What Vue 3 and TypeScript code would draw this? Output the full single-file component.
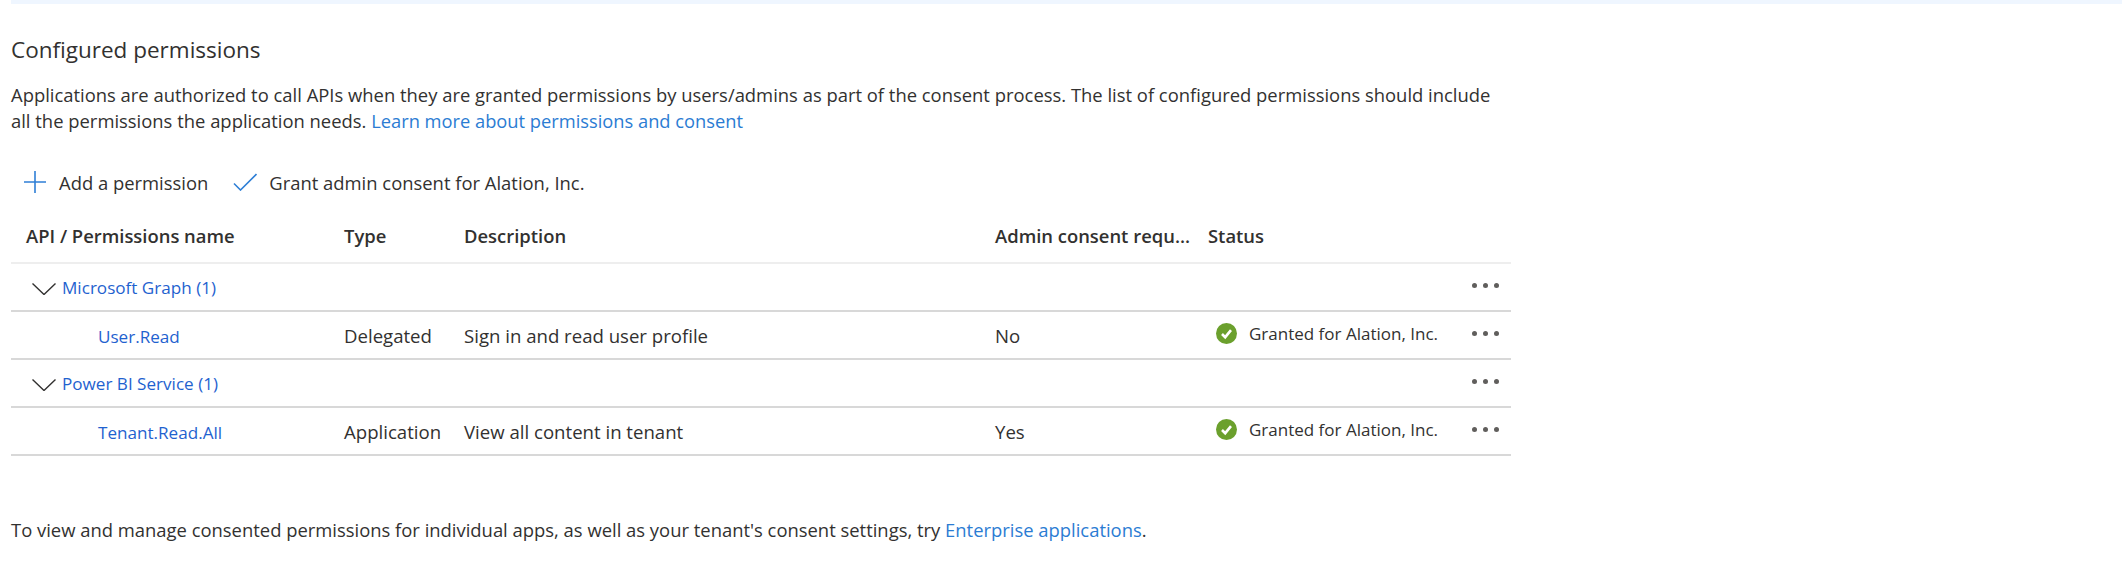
<script setup lang="ts">
interface Row {
  kind: 'group' | 'item'
  name: string
  type?: string
  description?: string
  admin?: string
  status?: string
}

const rows: Row[] = [
  { kind: 'group', name: 'Microsoft Graph (1)' },
  { kind: 'item', name: 'User.Read', type: 'Delegated', description: 'Sign in and read user profile', admin: 'No', status: 'Granted for Alation, Inc.' },
  { kind: 'group', name: 'Power BI Service (1)' },
  { kind: 'item', name: 'Tenant.Read.All', type: 'Application', description: 'View all content in tenant', admin: 'Yes', status: 'Granted for Alation, Inc.' },
]
</script>

<template>
  <div class="page">
    <div class="banner"></div>
    <h2 class="title">Configured permissions</h2>
    <p class="intro">
      Applications are authorized to call APIs when they are granted permissions by users/admins as part of the consent process. The list of configured permissions should include<br />
      all the permissions the application needs.
      <a class="link learn">Learn more about permissions and consent</a>
    </p>

    <div class="toolbar">
      <button class="tool tool-add">
        <svg width="22" height="22" viewBox="0 0 22 22"><path d="M11 0v22M0 11h22" fill="none" stroke="#2f7fd6" stroke-width="1.6" /></svg>
        <span>Add a permission</span>
      </button>
      <button class="tool tool-grant">
        <svg width="24" height="18" viewBox="0 0 24 18"><path d="M1 10.5 7.5 17 23.5 1" fill="none" stroke="#2f7fd6" stroke-width="1.6" /></svg>
        <span>Grant admin consent for Alation, Inc.</span>
      </button>
    </div>

    <div class="table">
      <div class="row head">
        <div class="cell first">API / Permissions name</div>
        <div class="cell">Type</div>
        <div class="cell">Description</div>
        <div class="cell">Admin consent requ...</div>
        <div class="cell status-head">Status</div>
        <div class="cell"></div>
      </div>
      <div v-for="row in rows" :key="row.name" class="row body">
        <div v-if="row.kind === 'group'" class="cell group-name">
          <svg class="chev" width="24" height="12" viewBox="0 0 24 12"><path d="M.5.5 12 11.5 23.5.5" fill="none" stroke="#323130" stroke-width="1.4" /></svg>
          <a class="name">{{ row.name }}</a>
        </div>
        <div v-else class="cell item-name"><a class="name">{{ row.name }}</a></div>
        <div class="cell">{{ row.type }}</div>
        <div class="cell">{{ row.description }}</div>
        <div class="cell">{{ row.admin }}</div>
        <div class="cell status">
          <template v-if="row.status">
            <svg class="ok" width="21" height="21" viewBox="0 0 21 21">
              <circle cx="10.5" cy="10.5" r="10.5" fill="#6ba02d" />
              <path d="M6 11l3.2 3.2L15 7.2" fill="none" stroke="#fff" stroke-width="2.6" />
            </svg>
            <span>{{ row.status }}</span>
          </template>
        </div>
        <div class="cell more"><i></i><i></i><i></i></div>
      </div>
    </div>

    <p class="footer">
      To view and manage consented permissions for individual apps, as well as your tenant's consent settings, try
      <a class="link">Enterprise applications</a>.
    </p>
  </div>
</template>

<style scoped>
.page {
  width: 2122px;
  height: 568px;
  padding-left: 11px;
  box-sizing: border-box;
  overflow: hidden;
  background: #fff;
  color: #323130;
  font-family: "Open Sans", "Noto Sans", sans-serif;
  font-size: 18.42px;
}
.banner {
  height: 4px;
  background: #eff6ff;
}
.title {
  margin: 30px 0 0;
  font-size: 22.5px;
  font-weight: 400;
  line-height: 32px;
  color: #323130;
}
.intro {
  margin: 15.5px 0 0;
  line-height: 26px;
  white-space: nowrap;
}
.link {
  color: #2b7cd3;
}
.learn {
  font-size: 18.3px;
}
.toolbar {
  display: flex;
  align-items: center;
  margin-top: 33.5px;
  height: 30px;
}
.tool {
  display: flex;
  align-items: center;
  padding: 0;
  border: 0;
  background: none;
  font: inherit;
  color: #323130;
}
.tool-add {
  margin-left: 13px;
  gap: 13px;
}
.tool-grant {
  margin-left: 25px;
  gap: 12px;
}
.table {
  width: 1500px;
  margin-top: 20px;
}
.row {
  display: grid;
  grid-template-columns: 333px 120px 531px 212px 264px 40px;
  align-items: center;
}
.head {
  height: 47px;
  font-weight: 600;
  padding-bottom: 8px;
  border-bottom: 2px solid #eeeeee;
  box-sizing: border-box;
}
.status-head {
  padding-left: 1px;
}
.body {
  height: 48px;
  font-size: 18.6px;
  border-bottom: 2px solid #d8d8d8;
  box-sizing: border-box;
}
.cell {
  white-space: nowrap;
  min-width: 0;
}
.first {
  padding-left: 15px;
}
.name {
  color: #1f62cf;
  font-size: 17.1px;
}
.group-name {
  display: flex;
  align-items: center;
  padding-left: 21px;
  gap: 6px;
}
.chev {
  flex: none;
  margin-top: 3px;
}
.item-name {
  padding-left: 87px;
}
.status {
  display: flex;
  align-items: center;
  padding-left: 9px;
  gap: 12px;
  font-size: 17px;
  transform: translateY(-2px);
}
.ok {
  flex: none;
}
.more {
  display: flex;
  align-items: center;
  gap: 6px;
  padding-left: 1px;
  transform: translateY(-2px);
}
.more i {
  width: 5px;
  height: 5px;
  border-radius: 50%;
  background: #605e5c;
}
.footer {
  margin: 61px 0 0;
  line-height: 26px;
  white-space: nowrap;
}
</style>
